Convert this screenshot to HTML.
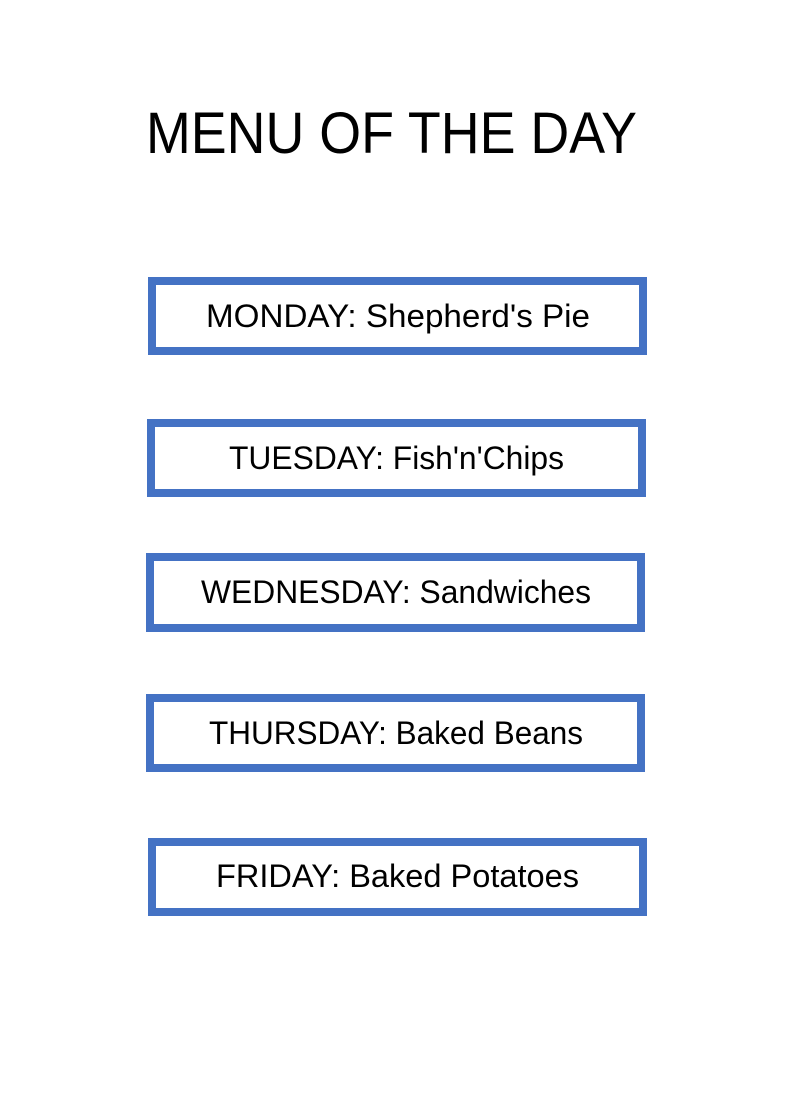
<!DOCTYPE html>
<html><head><style>html,body{margin:0;padding:0;background:#fff;}svg{display:block}</style></head>
<body>
<svg width="787" height="1115" xmlns="http://www.w3.org/2000/svg" font-family="Liberation Sans, Arial, sans-serif">
<rect width="787" height="1115" fill="#fff"/>
<text x="146" y="153" font-size="58" textLength="491" lengthAdjust="spacingAndGlyphs" fill="#000">MENU OF THE DAY</text>
<g fill="none" stroke="#4472c4" stroke-width="8">
<rect x="152" y="281" width="491" height="70"/>
<rect x="151" y="423" width="491" height="70"/>
<rect x="150" y="557" width="491" height="71"/>
<rect x="150" y="698" width="491" height="70"/>
<rect x="152" y="842" width="491" height="70"/>
</g>
<g font-size="32" fill="#000">
<text x="206" y="327" textLength="384" lengthAdjust="spacingAndGlyphs">MONDAY: Shepherd's Pie</text>
<text x="229" y="469" textLength="335" lengthAdjust="spacingAndGlyphs">TUESDAY: Fish'n'Chips</text>
<text x="201" y="603" textLength="390" lengthAdjust="spacingAndGlyphs">WEDNESDAY: Sandwiches</text>
<text x="209" y="744" textLength="374" lengthAdjust="spacingAndGlyphs">THURSDAY: Baked Beans</text>
<text x="216" y="887" textLength="363" lengthAdjust="spacingAndGlyphs">FRIDAY: Baked Potatoes</text>
</g>
</svg>
</body></html>
